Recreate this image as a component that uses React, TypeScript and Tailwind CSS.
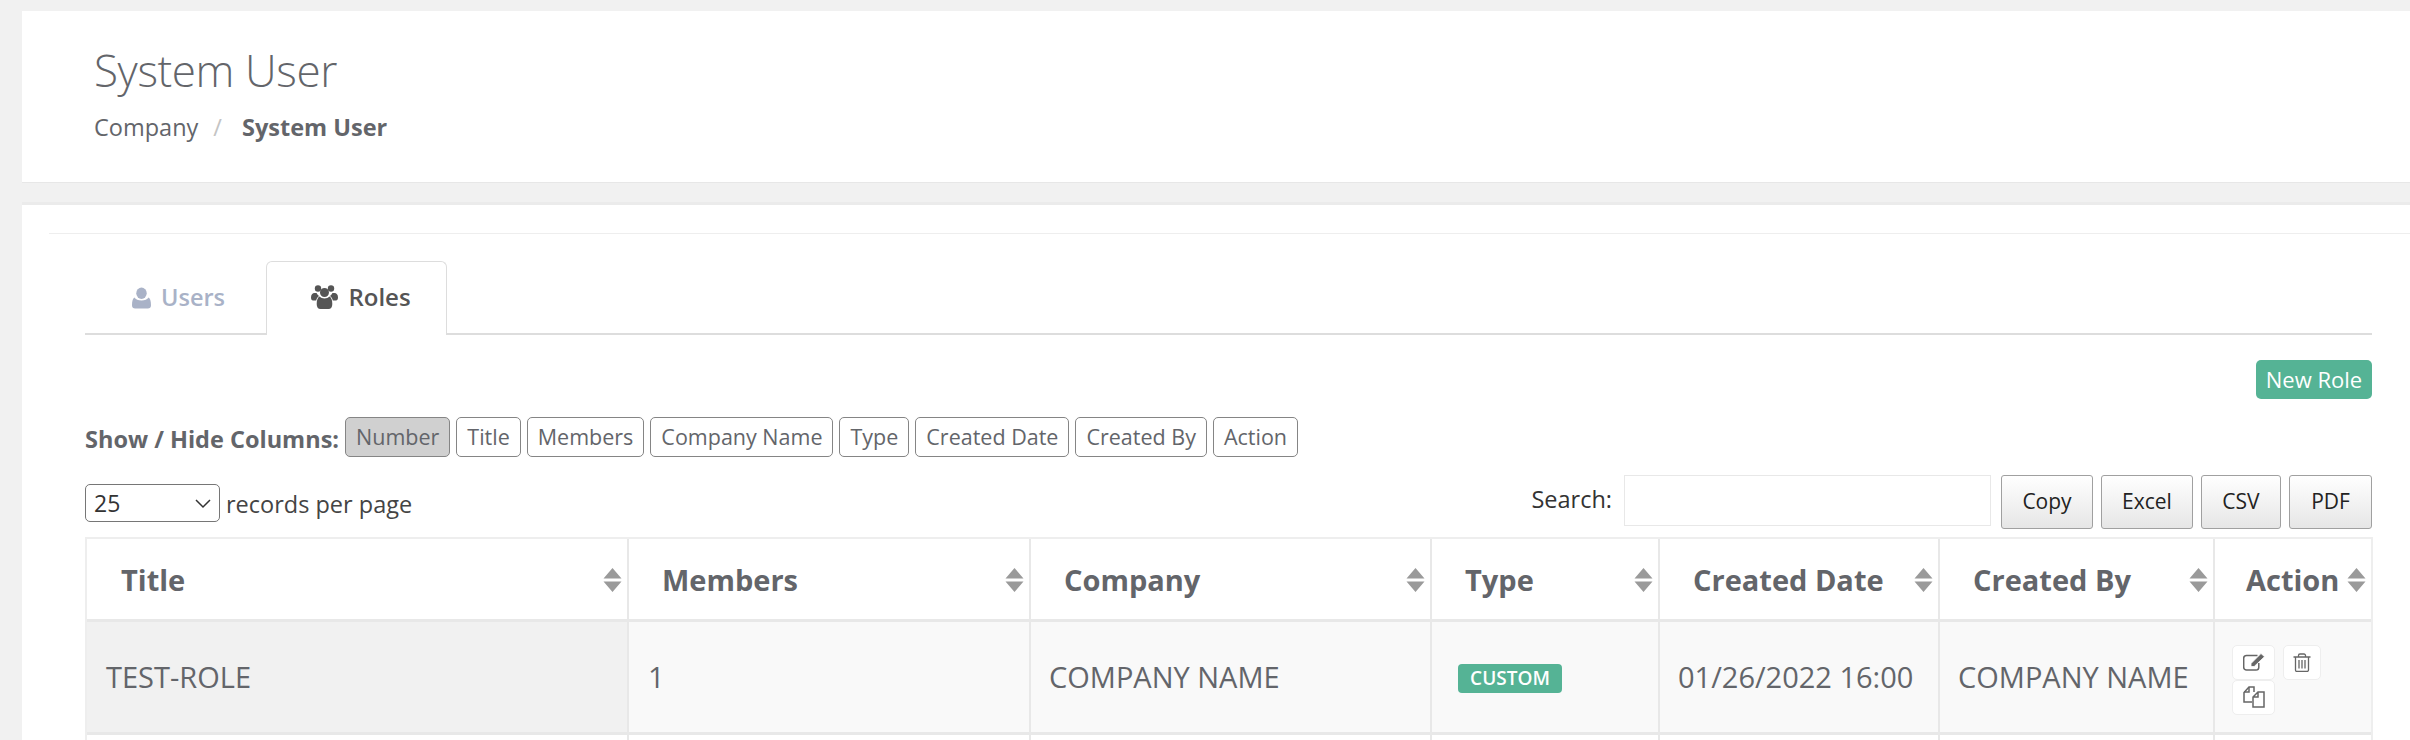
import React from 'react';

const columnToggles = ['Number', 'Title', 'Members', 'Company Name', 'Type', 'Created Date', 'Created By', 'Action'];
const exportButtons = [
  { label: 'Copy', width: 'w-[92px]' },
  { label: 'Excel', width: 'w-[92px]' },
  { label: 'CSV', width: 'w-[80px]' },
  { label: 'PDF', width: 'w-[83px]' },
];
const headers = [
  { label: 'Title', cls: 'w-[541px] pl-[34px]' },
  { label: 'Members', cls: 'w-[402px] pl-[33px]' },
  { label: 'Company', cls: 'w-[401px] pl-[33px]' },
  { label: 'Type', cls: 'w-[228px] pl-[33px]' },
  { label: 'Created Date', cls: 'w-[280px] pl-[33px]' },
  { label: 'Created By', cls: 'w-[275px] pl-[33px]' },
  { label: 'Action', cls: 'pl-[31px]' },
];

const SortIcon = () => (
  <svg width="19" height="24" viewBox="0 0 19 24" className="shrink-0" fill="#9a9a9a">
    <path d="M9.5 0 18.5 10.500H.5zM.5 13.500h18L9.500 24z" />
  </svg>
);

const UserIcon = () => (
  <svg width="19" height="22" viewBox="0 0 20 22" fill="#a9b2c7">
    <ellipse cx="10" cy="6" rx="5.500" ry="6" />
    <path d="M2.500 10.500C4 12.500 6.500 13.500 10 13.500s6-1 7.500-3C19 11.500 20 14 20 18.500c0 2.200-1.300 3.500-3.300 3.500H3.300C1.300 22 0 20.700 0 18.500 0 14 1 11.500 2.500 10.500z" />
  </svg>
);

const UsersIcon = () => (
  <svg width="27" height="24" viewBox="0 0 27 24" fill="#555">
    <circle cx="7" cy="3.500" r="3.200" />
    <circle cx="20" cy="3.500" r="3.200" />
    <circle cx="13.500" cy="7.500" r="4.500" />
    <path d="M3.500 8C1.500 8 0 9.500 0 12.500c0 2 .8 3 2 3h3.200c.3-2 1.200-3.500 2.800-4.600C6.800 10.200 6 9 5.600 8zM23.500 8c2 0 3.500 1.500 3.500 4.500 0 2-.8 3-2 3h-3.200c-.3-2-1.200-3.500-2.800-4.600C20.200 10.200 21 9 21.400 8z" />
    <path d="M8.500 11.500c1.200 1.300 3 2 5 2s3.800-.7 5-2c1.800 1 2.800 3.500 2.800 7.500 0 3-1.300 5-3.800 5H9.500C7 24 5.700 22 5.700 19c0-4 1-6.500 2.800-7.500z" />
  </svg>
);

const EditIcon = () => (
  <svg width="22" height="18" viewBox="0 0 22 18" fill="none" stroke="#666" strokeWidth="1.500">
    <path d="M14.500 2.500H3.500a2.800 2.800 0 0 0-2.800 2.800v9a2.800 2.800 0 0 0 2.800 2.800h9.500a2.800 2.800 0 0 0 2.800-2.800V10" />
    <path d="M8 13.500v-3L18 .5l3.500 3.200-10.300 9.800z" fill="#666" stroke="#fff" strokeWidth="0.800" />
  </svg>
);

const TrashIcon = () => (
  <svg width="18" height="19" viewBox="0 0 18 19" fill="none" stroke="#666" strokeWidth="1.300">
    <path d="M.500 4h17M5.500 4V2.500A1.500 1.500 0 0 1 7 1h4a1.500 1.500 0 0 1 1.500 1.500V4M2.500 4v13a1.500 1.500 0 0 0 1.500 1.500h10a1.500 1.500 0 0 0 1.500-1.500V4M6 7v8.500M9 7v8.500M12 7v8.500" />
  </svg>
);

const CopyIcon = () => (
  <svg width="22" height="22" viewBox="0 0 22 22" fill="none" stroke="#666" strokeWidth="1.500">
    <path d="M9 16H1V6.500L6 1h5v5" />
    <path d="M6 1v5H1" />
    <path d="M21 21H10V11l5-5h6zM15 6v5h-5" />
  </svg>
);

const ActionButton: React.FC<{ className: string; children: React.ReactNode }> = ({ className, children }) => (
  <button className={`flex items-center justify-center rounded-[5px] border border-[#eeeeee] bg-white ${className}`}>
    {children}
  </button>
);

const App: React.FC = () => {
  return (
    <div className="h-[740px] overflow-hidden bg-[#f1f1f1] pl-[22px] pt-[11px] font-['Open_Sans',sans-serif] text-[#63656a]">
      <header className="h-[172px] border-b border-[#e7e7e7] bg-white pl-[72px] pt-[31px]">
        <h1 className="text-[44px] font-light leading-[56px] tracking-[-0.4px]">System User</h1>
        <nav className="mt-[14px] flex items-center text-[23.500px] leading-[30px]">
          <span>Company</span>
          <span className="ml-[15px] text-[#c4c4c4]">/</span>
          <span className="ml-[20px] font-bold">System User</span>
        </nav>
      </header>

      <main className="mt-[19px] h-[540px] border-t-[3px] border-[#ebebeb] bg-white pl-[27px] pt-[28px] pr-[38px]">
        <div className="mr-[-38px] h-px bg-[#eeeeee]" />
        <div className="pl-[36px]">
          <div className="mt-[27px] flex h-[74px] border-b-2 border-[#dddddd] pl-[46px]">
            <div className="flex h-[74px] items-center gap-[10px] pr-[41px] pl-[1px] text-[23.500px] font-semibold text-[#a9b2c7]">
              <UserIcon />
              <span>Users</span>
            </div>
            <div className="flex h-[74px] w-[181px] items-center justify-center gap-[10px] rounded-t-[6px] border border-b-0 border-[#dddddd] bg-white pb-[3px] pl-[9px] text-[24px] font-semibold text-[#555555]">
              <UsersIcon />
              <span>Roles</span>
            </div>
          </div>

          <div className="mt-[25px] flex justify-end">
            <button className="flex h-[39px] w-[116px] items-center justify-center rounded-[5px] bg-[#55b395] text-[22px] text-white">
              New Role
            </button>
          </div>

          <div className="mt-[18px] flex h-[40px] items-center">
            <span className="mr-[6px] pt-[5px] text-[23.500px] font-bold">Show / Hide Columns:</span>
            <div className="flex gap-[6px]">
              {columnToggles.map((label, index) => (
                <button
                  key={label}
                  className={`flex h-[40px] items-center rounded-[5px] border border-[#858585] px-[10px] pt-[1px] text-[21.500px] ${
                    index === 0 ? 'bg-[#d0d0d0]' : 'bg-white'
                  }`}
                >
                  {label}
                </button>
              ))}
            </div>
          </div>

          <div className="mt-[18px] flex h-[54px] justify-between">
            <div className="flex items-start pt-[9px]">
              <div className="flex h-[38px] w-[135px] items-center justify-between rounded-[5px] border border-[#767676] pl-[8px] pr-[8px] pt-[1px] text-[23px] text-[#333333]">
                <span>25</span>
                <svg width="16" height="10" viewBox="0 0 16 10" fill="none" stroke="#333" strokeWidth="1.500">
                  <path d="M1 1l7 7 7-7" />
                </svg>
              </div>
              <span className="ml-[6px] pt-[1px] text-[23.500px] leading-[38px] text-[#444444]">records per page</span>
            </div>
            <div className="flex">
              <span className="mr-[12px] text-[23.500px] leading-[48px] text-[#333333]">Search:</span>
              <div className="mr-[10px] h-[51px] w-[367px] border border-[#e8e8e8] bg-white" />
              <div className="flex gap-[8px]">
                {exportButtons.map(({ label, width }) => (
                  <button
                    key={label}
                    className={`h-[54px] rounded-[3px] border border-[#a0a0a0] bg-gradient-to-b from-white to-[#e6e6e6] text-[21px] text-[#222222] ${width}`}
                  >
                    {label}
                  </button>
                ))}
              </div>
            </div>
          </div>

          <div className="mt-[8px] w-[2288px] border-2 border-[#eeeeee]">
            <table className="w-full table-fixed border-collapse">
              <thead>
                <tr className="h-[81px] border-b-[3px] border-[#e8e8e8]">
                  {headers.map(({ label, cls }) => (
                    <th key={label} className={`border-l-2 border-[#e8e8e8] pr-[5px] pt-[2px] text-left text-[29px] font-bold first:border-l-0 ${cls}`}>
                      <div className="flex items-center justify-between">
                        <span>{label}</span>
                        <SortIcon />
                      </div>
                    </th>
                  ))}
                </tr>
              </thead>
              <tbody className="text-[29px]">
                <tr className="h-[113px] border-b-[3px] border-[#e8e8e8] bg-[#f9f9f9]">
                  <td className="bg-[#f1f1f1] pl-[19px]">TEST-ROLE</td>
                  <td className="border-l-2 border-[#e8e8e8] pl-[19px]">1</td>
                  <td className="border-l-2 border-[#e8e8e8] pl-[18px]">COMPANY NAME</td>
                  <td className="border-l-2 border-[#e8e8e8] pb-[6px] pl-[26px]">
                    <span className="inline-flex h-[29px] w-[104px] items-center justify-center rounded-[4px] bg-[#55b395] text-[19px] font-semibold text-white">
                      CUSTOM
                    </span>
                  </td>
                  <td className="border-l-2 border-[#e8e8e8] pl-[18px]">01/26/2022 16:00</td>
                  <td className="border-l-2 border-[#e8e8e8] pl-[18px]">COMPANY NAME</td>
                  <td className="border-l-2 border-[#e8e8e8] pl-[17px] pt-[6px]">
                    <div className="flex w-[95px] flex-wrap gap-x-[8px]">
                      <ActionButton className="h-[35px] w-[43px]"><EditIcon /></ActionButton>
                      <ActionButton className="h-[35px] w-[38px]"><TrashIcon /></ActionButton>
                      <ActionButton className="h-[35px] w-[43px]"><CopyIcon /></ActionButton>
                    </div>
                  </td>
                </tr>
                <tr className="h-[60px]">
                  <td />
                  <td className="border-l-2 border-[#e8e8e8]" />
                  <td className="border-l-2 border-[#e8e8e8]" />
                  <td className="border-l-2 border-[#e8e8e8]" />
                  <td className="border-l-2 border-[#e8e8e8]" />
                  <td className="border-l-2 border-[#e8e8e8]" />
                  <td className="border-l-2 border-[#e8e8e8]" />
                </tr>
              </tbody>
            </table>
          </div>
        </div>
      </main>
    </div>
  );
};

export default App;
